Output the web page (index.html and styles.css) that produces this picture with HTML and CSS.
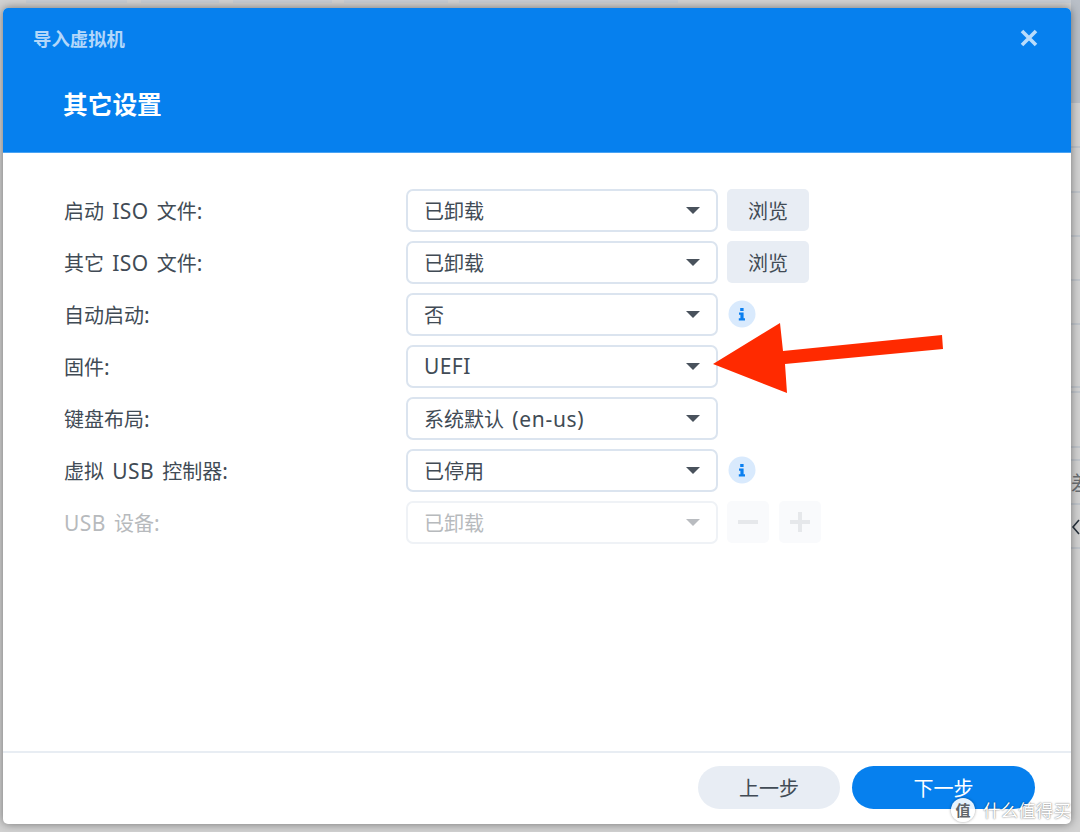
FILE: index.html
```html
<!DOCTYPE html>
<html lang="zh">
<head>
<meta charset="utf-8">
<title>导入虚拟机</title>
<link rel="stylesheet" href="styles.css">
</head>
<body>
<svg class="backdrop" width="1080" height="832" viewBox="0 0 1080 832">
  <g class="bd-tabs">
    <rect x="26" y="0" width="101" height="3"/><rect x="141" y="0" width="78" height="3"/>
    <rect x="233" y="0" width="99" height="3"/><rect x="344" y="0" width="104" height="3"/>
    <rect x="459" y="0" width="219" height="3"/><rect x="980" y="0" width="100" height="3"/>
  </g>
  <rect class="bd-head" x="1071" y="0" width="9" height="103"/>
  <g class="bd-lines">
    <path d="M1071 147H1080M1071 192H1080M1071 236H1080M1071 280H1080M1071 324H1080M1071 387H1080M1071 392H1080M1071 447H1080M1071 460H1080M1071 504H1080M1071 548H1080"/>
  </g>
  <text class="bd-glyph" x="1071" y="491">差</text>
  <path class="bd-chev" d="M1079 520L1073 527L1079 534"/>
</svg>

<main class="dialog">
  <header class="dialog-head">
    <div class="title-bar">
      <span class="app-title">导入虚拟机</span>
      <svg class="close" width="18" height="18" viewBox="0 0 18 18"><path d="M2 2L16 16M16 2L2 16"/></svg>
    </div>
    <h1 class="step-title">其它设置</h1>
  </header>

  <section class="form">
    <div class="row">
      <label class="label">启动 <span class="latin">ISO</span> 文件<span class="latin">:</span></label>
      <div class="select"><span>已卸载</span><i class="caret"></i></div>
      <button class="btn">浏览</button>
    </div>
    <div class="row">
      <label class="label">其它 <span class="latin">ISO</span> 文件<span class="latin">:</span></label>
      <div class="select"><span>已卸载</span><i class="caret"></i></div>
      <button class="btn">浏览</button>
    </div>
    <div class="row">
      <label class="label">自动启动<span class="latin">:</span></label>
      <div class="select"><span>否</span><i class="caret"></i></div>
      <svg class="info" width="28" height="28" viewBox="0 0 28 28"><circle class="info-bg" cx="14" cy="14" r="13.5"/><path class="info-i" d="M12.2 8h3.4v3h-3.4zM11 12.5h4.6v5.7H17v2.3h-6.2v-2.3h1.6v-3.4H11z"/></svg>
    </div>
    <div class="row">
      <label class="label">固件<span class="latin">:</span></label>
      <div class="select"><span><span class="latin">UEFI</span></span><i class="caret"></i></div>
    </div>
    <div class="row">
      <label class="label">键盘布局<span class="latin">:</span></label>
      <div class="select"><span>系统默认 <span class="latin latin-wide">(en-us)</span></span><i class="caret"></i></div>
    </div>
    <div class="row">
      <label class="label">虚拟 <span class="latin">USB</span> 控制器<span class="latin">:</span></label>
      <div class="select"><span>已停用</span><i class="caret"></i></div>
      <svg class="info" width="28" height="28" viewBox="0 0 28 28"><circle class="info-bg" cx="14" cy="14" r="13.5"/><path class="info-i" d="M12.2 8h3.4v3h-3.4zM11 12.5h4.6v5.7H17v2.3h-6.2v-2.3h1.6v-3.4H11z"/></svg>
    </div>
    <div class="row row-disabled">
      <label class="label"><span class="latin">USB</span> 设备<span class="latin">:</span></label>
      <div class="select"><span>已卸载</span><i class="caret"></i></div>
      <div class="icon-btns">
        <button class="icon-btn"><svg width="20" height="20" viewBox="0 0 20 20"><path d="M0 10H20"/></svg></button>
        <button class="icon-btn"><svg width="20" height="20" viewBox="0 0 20 20"><path d="M0 10H20M10 0V20"/></svg></button>
      </div>
    </div>
  </section>

  <footer class="dialog-foot">
    <button class="pill pill-back">上一步</button>
    <button class="pill pill-next">下一步</button>
  </footer>
</main>

<svg class="arrow" width="1080" height="832" viewBox="0 0 1080 832"><path d="M713 364L780 323L783 351L942 335L943 349L785 364L787 393Z"/></svg>

<div class="watermark">
  <span class="wm-logo">值</span>
  <span class="wm-text">什么值得买</span>
</div>
</body>
</html>
```

FILE: styles.css
```css
* { box-sizing: border-box; }
html, body { margin: 0; height: 100%; }
body {
  width: 1080px;
  height: 832px;
  overflow: hidden;
  background: #d2d2d2;
  padding: 8px 9px 8px 3px;
  position: relative;
  font-family: "Noto Sans", "Noto Sans CJK SC", sans-serif;
  font-size: 20px;
  color: #414b55;
}
.backdrop { position: absolute; left: 0; top: 0; }
.bd-tabs rect { fill: #c8cdd3; }
.bd-head { fill: #b9bfc7; }
.bd-lines path { stroke: #aeb8c4; stroke-width: 1; fill: none; }
.bd-glyph { font-size: 20px; fill: #6a6f74; }
.bd-chev { stroke: #27313c; stroke-width: 1.6; fill: none; }

.dialog {
  position: relative;
  width: 1068px;
  height: 816px;
  background: #fff;
  border-radius: 5px;
  box-shadow: 0 0 10px rgba(0, 0, 0, .45);
  display: flex;
  flex-direction: column;
  overflow: hidden;
}
.dialog-head {
  height: 145px;
  background: #0680ee;
  border-bottom: 1px solid #4aa3f3;
  flex: none;
}
.title-bar {
  height: 62px;
  padding: 0 33px 0 30px;
  display: flex;
  align-items: center;
  justify-content: space-between;
}
.app-title { font-size: 18.4px; font-weight: 700; color: #b3d7fa; line-height: 1; }
.close { margin-top: -2px; }
.close path { stroke: #b9dcfb; stroke-width: 3.6; fill: none; }
.step-title {
  margin: 0;
  padding: 18px 0 0 60px;
  font-size: 24.7px;
  font-weight: 700;
  color: #fff;
  line-height: 34px;
}

.form {
  flex: 1;
  padding: 36px 0 0 61px;
  display: flex;
  flex-direction: column;
  gap: 10px;
}
.row { height: 42px; display: flex; align-items: center; }
.latin { font-size: 21px; letter-spacing: .4px; line-height: 1; }
.latin-wide { letter-spacing: .7px; }
.label { width: 342px; flex: none; word-spacing: 3px; }
.select {
  width: 312px;
  height: 43px;
  flex: none;
  border: 2px solid #dbe4ef;
  border-radius: 7px;
  padding: 0 16px;
  display: flex;
  align-items: center;
  justify-content: space-between;
  background: #fff;
  word-spacing: 3px;
}
.caret {
  width: 0; height: 0;
  border-left: 7px solid transparent;
  border-right: 7px solid transparent;
  border-top: 7px solid #49525c;
}
.btn {
  width: 82px;
  height: 42px;
  margin-left: 9px;
  border: 0;
  border-radius: 5px;
  background: #e8edf4;
  color: #414b55;
  font: inherit;
  padding: 0;
}
.info { margin-left: 10px; flex: none; }
.info-bg { fill: #d9eafd; }
.info-i { fill: #0a7ff0; }

.row-disabled .label,
.row-disabled .select span { color: #b7babd; }
.row-disabled .select { border-color: #eff2f6; }
.row-disabled .caret { border-top-color: #b9bcc0; }
.icon-btns { display: flex; gap: 10px; margin-left: 9px; }
.icon-btn {
  width: 42px;
  height: 42px;
  border: 0;
  border-radius: 5px;
  background: #f9fafc;
  padding: 0;
  display: flex;
  align-items: center;
  justify-content: center;
}
.icon-btn path { stroke: #e6e8eb; stroke-width: 4; fill: none; }

.dialog-foot {
  height: 73px;
  flex: none;
  border-top: 2px solid #e8edf3;
  padding: 13px 36px 0 0;
  display: flex;
  justify-content: flex-end;
  gap: 12px;
}
.pill {
  height: 43px;
  border: 0;
  border-radius: 22px;
  font: inherit;
  padding: 0;
}
.pill-back { width: 142px; background: #e8edf4; color: #414b55; }
.pill-next { width: 183px; background: #0680ee; color: #fff; }

.arrow { position: absolute; left: 0; top: 0; pointer-events: none; }
.arrow path { fill: #ff2a00; }

.watermark {
  position: absolute;
  left: 951px;
  top: 798px;
  display: flex;
  align-items: center;
  gap: 8px;
}
.wm-logo {
  width: 24px;
  height: 24px;
  border-radius: 50%;
  background: rgba(255, 255, 255, .9);
  box-shadow: 0 0 3px rgba(0, 0, 0, .4);
  color: #5f6469;
  font-size: 15px;
  font-weight: 700;
  line-height: 24px;
  text-align: center;
}
.wm-text {
  font-size: 17.6px;
  line-height: 24px;
  color: #fff;
  text-shadow: 0 0 2px rgba(0, 0, 0, .45), 0 0 1px rgba(0, 0, 0, .3);
}
```
